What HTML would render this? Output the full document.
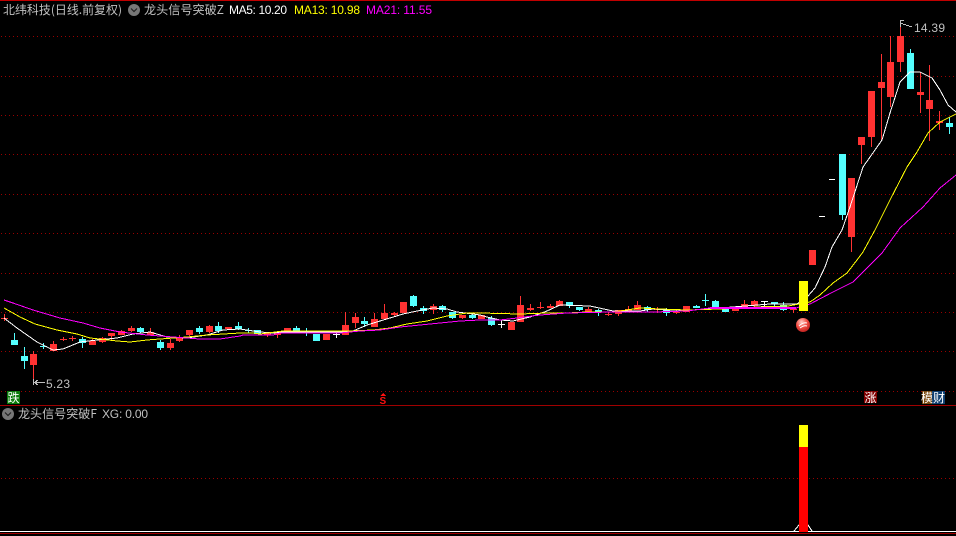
<!DOCTYPE html>
<html><head><meta charset="utf-8"><style>
html,body{margin:0;padding:0;background:#000;width:956px;height:536px;overflow:hidden}
svg{display:block}
text{font-family:"Liberation Sans","WenQuanYi Zen Hei","Noto Sans CJK SC",sans-serif;font-size:12px}
.c{font-family:"WenQuanYi Zen Hei","Noto Sans CJK SC",sans-serif}
</style></head><body>
<svg width="956" height="536" viewBox="0 0 956 536" xmlns="http://www.w3.org/2000/svg">
<defs>
<pattern id="d" width="4" height="1" patternUnits="userSpaceOnUse"><rect x="1" width="1" height="1" fill="#990000"/></pattern>
<radialGradient id="b" cx=".4" cy=".3" r=".8"><stop offset="0" stop-color="#ffd0c8"/><stop offset=".5" stop-color="#f04a40"/><stop offset="1" stop-color="#b01818"/></radialGradient>
</defs>
<rect width="956" height="536" fill="#000"/>
<g shape-rendering="crispEdges">
<path d="M0 .5H956" stroke="#c00000" fill="none"/>
<path d="M0 405.5H956M0 533.5H956" stroke="#a00000" fill="none"/>
<g fill="url(#d)">
<rect y="36" width="956" height="1"/><rect y="76" width="956" height="1"/><rect y="115" width="956" height="1"/><rect y="154" width="956" height="1"/><rect y="194" width="956" height="1"/><rect y="233" width="956" height="1"/><rect y="273" width="956" height="1"/><rect y="312" width="956" height="1"/><rect y="351" width="956" height="1"/><rect y="391" width="956" height="1"/><rect y="478" width="956" height="1"/>
</g>
<!-- red wicks -->
<path stroke="#ff3232" fill="none" d="M4.5 314V321M33.5 351V383M53.5 341V351M63.5 337V341M72.5 336V341M92.5 339V345M102.5 337V343M111.5 333V340M121.5 330V335M131.5 326V332M150.5 328V335M170.5 339V350M179.5 335V342M189.5 330V336M209.5 325V333M267.5 333V337M277.5 332V338M345.5 312V335M355.5 313V328M374.5 313V327M384.5 304V320M394.5 312V316M433.5 304V314M462.5 315V319M520.5 296V322M530.5 304V311M540.5 302V309M550.5 304V308M559.5 300V306M588.5 307V312M608.5 312V316M618.5 310V316M628.5 306V311M637.5 301V310M657.5 307V313M676.5 309V314M744.5 300V308M754.5 300V308M793.5 309V313M851.5 178V252M861.5 137V164M871.5 91V147M881.5 54V140M890.5 36V107M900.5 21V72M920.5 72V113M929.5 65V141M939.5 111V130"/>
<!-- red bodies -->
<path fill="#ff3232" d="M1 318h7v1h-7zM30 354h7v11h-7zM50 344h7v7h-7zM60 339h7v1h-7zM69 338h7v1h-7zM89 341h7v4h-7zM99 338h7v4h-7zM108 333h7v3h-7zM118 331h7v4h-7zM128 328h7v3h-7zM147 332h7v3h-7zM167 343h7v5h-7zM176 337h7v4h-7zM186 330h7v5h-7zM206 326h7v6h-7zM225 327h7v2h-7zM264 333h7v2h-7zM274 332h7v3h-7zM284 328h7v4h-7zM323 334h7v6h-7zM342 325h7v10h-7zM352 317h7v6h-7zM371 319h7v8h-7zM381 313h7v6h-7zM391 313h7v2h-7zM400 302h7v11h-7zM430 306h7v4h-7zM459 315h7v3h-7zM478 315h7v4h-7zM508 322h7v8h-7zM517 305h7v17h-7zM527 308h7v2h-7zM537 307h7v1h-7zM547 306h7v2h-7zM556 301h7v5h-7zM585 309h7v3h-7zM605 314h7v1h-7zM615 310h7v4h-7zM625 309h7v2h-7zM634 305h7v5h-7zM654 309h7v1h-7zM673 312h7v1h-7zM683 306h7v6h-7zM732 307h7v4h-7zM741 304h7v4h-7zM751 301h7v5h-7zM790 309h7v1h-7zM809 250h7v15h-7zM848 178h7v59h-7zM858 137h7v8h-7zM868 91h7v46h-7zM878 82h7v6h-7zM887 62h7v35h-7zM897 36h7v26h-7zM917 92h7v3h-7zM926 100h7v9h-7zM936 121h7v2h-7z"/>
<!-- cyan wicks -->
<path stroke="#54ffff" fill="none" d="M14.5 333V345M24.5 347V369M43.5 343V349M82.5 337V348M140.5 327V333M160.5 340V350M199.5 326V334M218.5 322V333M238.5 322V330M248.5 328V333M296.5 326V332M306.5 328V336M364.5 317V327M413.5 295V307M423.5 306V314M442.5 305V312M452.5 312V319M472.5 313V319M491.5 316V326M569.5 302V308M579.5 307V311M598.5 309V316M647.5 306V312M666.5 308V316M696.5 305V308M705.5 294V306M715.5 300V307M774.5 302V307M783.5 302V311M842.5 154V220M910.5 49V89M949.5 117V134"/>
<!-- cyan bodies -->
<path fill="#54ffff" d="M11 340h7v5h-7zM21 356h7v5h-7zM40 346h7v1h-7zM79 339h7v4h-7zM137 328h7v4h-7zM157 342h7v6h-7zM196 328h7v4h-7zM215 326h7v5h-7zM235 326h7v3h-7zM245 330h7v1h-7zM254 330h7v4h-7zM293 328h7v4h-7zM303 331h7v1h-7zM313 334h7v7h-7zM361 321h7v3h-7zM410 296h7v10h-7zM420 308h7v3h-7zM439 306h7v4h-7zM449 312h7v6h-7zM469 315h7v3h-7zM488 318h7v7h-7zM566 302h7v4h-7zM576 307h7v3h-7zM595 310h7v2h-7zM644 307h7v3h-7zM663 310h7v3h-7zM693 306h7v2h-7zM702 300h7v1h-7zM712 301h7v6h-7zM722 307h7v5h-7zM771 302h7v2h-7zM780 305h7v5h-7zM839 154h7v61h-7zM907 53h7v36h-7zM946 123h7v4h-7z"/>
<!-- white doji -->
<path stroke="#fff" fill="none" d="M333 334.5h7M336.5 333V338M498 324.5h7M501.5 320V328M761 301.5h7M761 306.5h7M764.5 301V306M819 216.5h6M829 179.5h6"/>
<!-- MA lines: white under yellow under magenta -->
<polyline fill="none" stroke="#ffffff" points="4,318 17,328 37,342 53,350 63,349 80,342 97,340 117,338 133,334 150,332 167,337 187,338 207,335 223,330 240,329 260,332 273,333 283,332 350,332 353,331 367,325 380,321 390,318 403,314 417,311 433,308 447,309 457,312 473,314 480,315 487,317 500,320 513,321 530,317 547,311 560,305 590,306 613,311 640,311 653,309 667,310 693,310 713,308 720,308 770,304 797,304 808,296 815,288 825,267 832,247 842,230 850,207 863,167 882,140 890,113 900,82 910,72 920,72 932,78 940,90 948,105 956,112"/>
<polyline fill="none" stroke="#ffff00" points="4,308 20,317 35,324 57,330 77,334 90,338 117,341 130,342 147,340 160,339 187,337 207,335 240,333 253,333 260,334 283,331 350,331 373,330 390,328 407,324 427,321 447,316 467,313 480,313 520,314 547,313 567,313 587,312 613,312 640,308 660,309 687,310 720,309 743,308 757,307 788,306 810,302 820,295 833,283 847,273 857,260 863,252 875,230 890,200 907,167 917,152 928,133 940,122 956,114"/>
<polyline fill="none" stroke="#ff00ff" points="4,300 13,303 33,310 60,318 83,323 100,328 120,332 147,335 173,337 200,339 220,339 240,336 243,335 273,335 280,333 340,333 360,331 380,330 400,327 420,325 440,323 460,321 480,320 500,320 517,318 540,315 567,313 613,312 653,312 687,311 710,308 796,308 810,304 833,292 853,282 867,268 875,260 882,253 900,228 923,207 940,188 956,175"/>
<rect x="710" y="307" width="86" height="2" fill="#ff00ff"/>
<!-- yellow bar -->
<rect x="799" y="281" width="9" height="30" fill="#ffff00"/>
<!-- lower pane -->
<path stroke="#fff" fill="none" d="M0 531.5H956"/>
<polyline fill="none" stroke="#fff" points="794,531 799,525 808,525 812,531"/>
<rect x="799" y="425" width="9" height="22" fill="#ffff00"/>
<rect x="799" y="447" width="9" height="85" fill="#ff0000"/>
<!-- markers -->
<path stroke="#bdbdbd" fill="none" d="M34 382.5h11M35 381.5h2M36 380.5h2M35 383.5h2M36 384.5h2M33.5 379V385M900.5 20V27M900 20.5h4M900 23.5h3M903 24.5h3M906 25.5h3M909 26.5h3"/>
<rect x="7" y="391" width="13" height="13" fill="#0a7a0a"/>
<rect x="864" y="391" width="13" height="12" fill="#800000"/>
<rect x="922" y="391" width="11" height="13" fill="#7a4a10"/>
<rect x="932" y="391" width="13" height="13" fill="#0f3f70"/>
<path fill="#ff1010" d="M383 393l3 3h-6z"/>
</g>
<circle cx="803" cy="325" r="7" fill="url(#b)"/>
<path d="M799 326q4-4 8-3M800 328q4-3 7-2" stroke="#fff" fill="none"/>
<!-- texts -->
<text class="c" x="3" y="14" fill="#c0c0c0" textLength="119" lengthAdjust="spacingAndGlyphs">北纬科技(日线.前复权)</text>
<circle cx="134" cy="10" r="6" fill="#777"/>
<path d="M131 8.5l3 3 3-3" stroke="#222" stroke-width="1.2" fill="none"/>
<text class="c" x="144" y="14" fill="#c0c0c0" textLength="80" lengthAdjust="spacingAndGlyphs">龙头信号突破Z</text>
<text x="229" y="14" fill="#fff" textLength="58">MA5: 10.20</text>
<text x="294" y="14" fill="#ffff00" textLength="66">MA13: 10.98</text>
<text x="366" y="14" fill="#ff00ff" textLength="66">MA21: 11.55</text>
<text x="914" y="32" fill="#c0c0c0" textLength="31">14.39</text>
<text x="46" y="388" fill="#c0c0c0" textLength="24">5.23</text>
<text class="c" x="7.5" y="402" fill="#fff">跌</text>
<text x="379.5" y="404" fill="#ff1010" style="font-size:10px;font-weight:bold">S</text>
<text class="c" x="864.5" y="402" fill="#fff">涨</text>
<text class="c" x="921" y="402" fill="#fff">模</text>
<text class="c" x="933" y="402" fill="#fff">财</text>
<circle cx="8" cy="414" r="6" fill="#777"/>
<path d="M5 412.5l3 3 3-3" stroke="#222" stroke-width="1.2" fill="none"/>
<text class="c" x="18" y="418" fill="#c0c0c0" textLength="79" lengthAdjust="spacingAndGlyphs">龙头信号突破F</text>
<text x="102" y="418" fill="#c0c0c0" textLength="46">XG: 0.00</text>
</svg>
</body></html>
